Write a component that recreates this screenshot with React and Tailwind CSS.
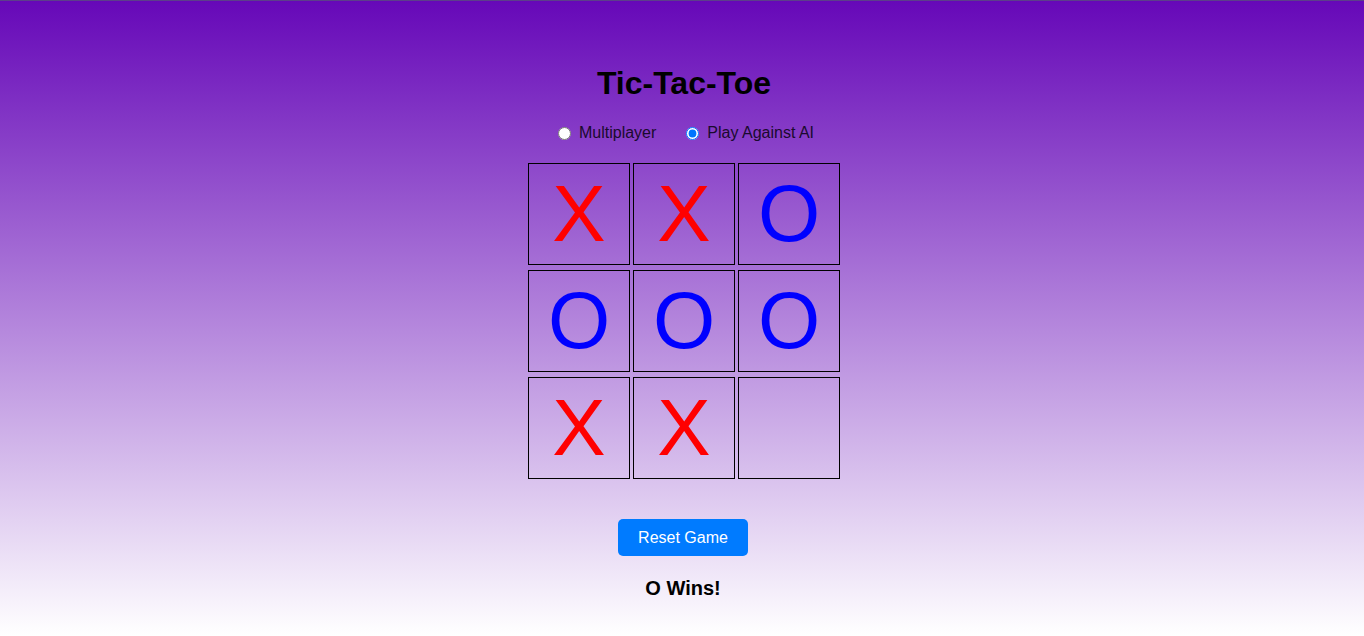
import React from "react";

const board = ["X", "X", "O", "O", "O", "O", "X", "X", ""];

export default function App() {
  return (
    <div
      className="w-full h-[636px] pl-[4px] flex flex-col items-center border-t border-[#5c3f8a] bg-[linear-gradient(to_bottom,#6608b8,#ffffff)] text-black"
      style={{ fontFamily: '"Liberation Sans", Arial, sans-serif' }}
    >
      <h1 className="mt-[60px] text-[32px] leading-[44px] font-bold">Tic-Tac-Toe</h1>
      <div className="mt-[18px] pl-[4px] flex items-center text-[16px] leading-[20px] text-[#1a0a2e]">
        <label className="flex items-center mr-[30px]">
          <input type="radio" name="mode" readOnly className="m-0 mr-[8px] w-[13px] h-[13px]" />
          Multiplayer
        </label>
        <label className="flex items-center">
          <input type="radio" name="mode" readOnly defaultChecked className="m-0 mr-[8px] w-[13px] h-[13px]" />
          Play Against AI
        </label>
      </div>
      <div className="mt-[20px] grid grid-cols-[102px_102px_102px] gap-x-[3px] gap-y-[5px]">
        {board.map((v, i) => (
          <div
            key={i}
            className={`w-[102px] h-[102px] border border-black flex items-center justify-center text-[80px] leading-none ${
              v === "X" ? "text-[#ff0000]" : "text-[#0000ff]"
            }`}
          >
            {v}
          </div>
        ))}
      </div>
      <button className="mt-[40px] mr-[2px] w-[130px] h-[37px] rounded-[5px] bg-[#007bff] text-white text-[16px]">
        Reset Game
      </button>
      <div className="mt-[20px] mr-[2px] text-[20px] font-bold leading-[24px]">O Wins!</div>
    </div>
  );
}
